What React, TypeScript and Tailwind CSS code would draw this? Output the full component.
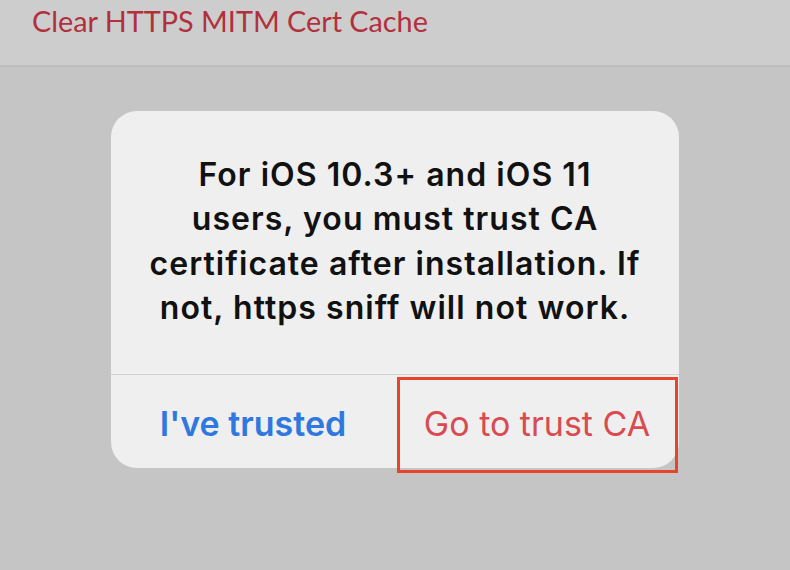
import React from "react";

export default function App() {
  return (
    <div className="w-[790px] h-[570px] bg-[#c5c5c5] overflow-hidden flex flex-col" style={{ fontFamily: "Inter, 'Open Sans', sans-serif" }}>
      <div className="h-[67px] bg-[#cdcdcd] border-b-2 border-[#bdbdbd] flex items-start pl-[32px] shrink-0">
        <span className="text-[#b2303c] text-[28.8px] leading-none mt-[7px]" style={{ fontFamily: "Lato, 'Liberation Sans', sans-serif" }}>
          Clear HTTPS MITM Cert Cache
        </span>
      </div>
      <div className="flex justify-center pt-[44px]">
        <div className="w-[568px] h-[357px] bg-[#efefef] rounded-[26px] flex flex-col">
          <div className="h-[264px] flex items-center justify-center px-[8px] pb-[2px] border-b border-[#d2d2d2]">
            <p className="text-center text-[32px] leading-[44.5px] font-semibold text-[#111] tracking-[1.05px]">
              For iOS 10.3+ and iOS 11<br />
              users, you must trust CA<br />
              certificate after installation. If<br />
              not, https sniff will not work.
            </p>
          </div>
          <div className="flex flex-1">
            <div className="flex-1 flex items-center justify-center pt-[4px]">
              <span className="text-[#2f78df] text-[34px] font-semibold">I've trusted</span>
            </div>
            <div className="flex-1 relative flex items-center justify-center pt-[4px]">
              <span className="text-[#d84b50] text-[34px]">Go to trust CA</span>
              <div className="absolute left-[2px] top-[2px] w-[281px] h-[96px] border-[3px] border-[#e8432b]" />
            </div>
          </div>
        </div>
      </div>
    </div>
  );
}
